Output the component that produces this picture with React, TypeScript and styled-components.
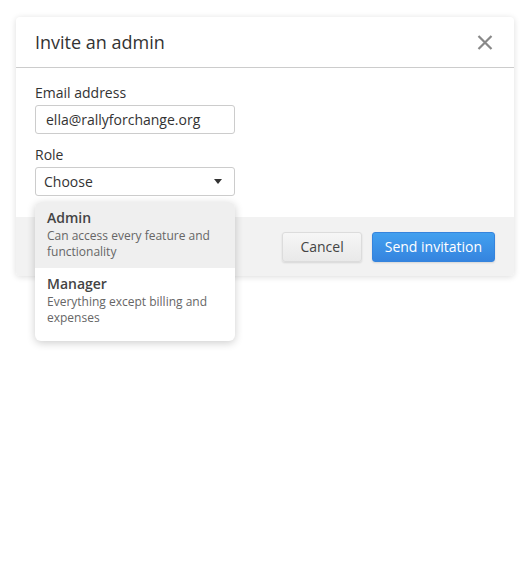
import React from "react"
import styled, { createGlobalStyle } from "styled-components"

const GlobalStyle = createGlobalStyle`
  body {
    margin: 0;
    background: #ffffff;
    font-family: "Open Sans", "Noto Sans", sans-serif;
    color: #333333;
  }
`

const Page = styled.div`
  min-height: 562px;
  box-sizing: border-box;
  padding: 17px 14px 0 16px;
`

const Dialog = styled.div`
  width: 498px;
  background: #ffffff;
  border-radius: 4px;
  box-shadow: 0 1px 6px rgba(0, 0, 0, 0.14);
  position: relative;
`

const Header = styled.div`
  height: 50px;
  display: flex;
  align-items: center;
  justify-content: space-between;
  padding: 0 19px;
  border-bottom: 1px solid #cccccc;
`

const Title = styled.h2`
  margin: 0;
  font-size: 18px;
  font-weight: 400;
  color: #333333;
`

const CloseButton = styled.button`
  border: none;
  background: transparent;
  padding: 0;
  width: 18px;
  height: 18px;
  display: flex;
  align-items: center;
  justify-content: center;
  cursor: pointer;
  margin-right: 1px;
`

const Body = styled.div`
  padding: 15px 19px 21px;
  display: flex;
  flex-direction: column;
`

const Label = styled.label`
  font-size: 14px;
  line-height: 20px;
  color: #333333;
  margin-bottom: 2px;
`

const Field = styled.div`
  width: 200px;
  height: 29px;
  box-sizing: border-box;
  border: 1px solid #cccccc;
  border-radius: 3px;
  display: flex;
  align-items: center;
  justify-content: space-between;
  padding: 0 12px 0 ${props => props.$inset}px;
  font-size: 14px;
  color: #333333;
  margin-bottom: ${props => props.$gap}px;
  position: relative;
`

const Arrow = styled.span`
  width: 0;
  height: 0;
  border-left: 4px solid transparent;
  border-right: 4px solid transparent;
  border-top: 5px solid #333333;
`

const Menu = styled.div`
  position: absolute;
  top: 34px;
  left: -1px;
  width: 200px;
  background: #ffffff;
  border-radius: 6px;
  box-shadow: 0 2px 8px rgba(0, 0, 0, 0.2);
  padding-bottom: 7px;
  overflow: hidden;
  z-index: 2;
`

const Option = styled.div`
  padding: 6px 12px 8px;
  background: ${props => props.$active ? "#efefef" : "#ffffff"};
`

const OptionTitle = styled.div`
  font-size: 14px;
  line-height: 20px;
  font-weight: 600;
  color: #444444;
`

const OptionText = styled.div`
  font-size: 12px;
  line-height: 16px;
  color: #666666;
`

const Footer = styled.div`
  background: #f2f2f2;
  height: 59px;
  box-sizing: border-box;
  padding: 15px 19px 0;
  display: flex;
  justify-content: flex-end;
  align-items: flex-start;
  gap: 10px;
  border-radius: 0 0 4px 4px;
`

const Button = styled.button`
  height: 30px;
  padding: 0 ${props => props.$primary ? 12 : 17}px 1px;
  border-radius: 3px;
  font-family: "Open Sans", "Noto Sans", sans-serif;
  font-size: 14px;
  cursor: pointer;
  border: 1px solid ${props => props.$primary ? "#3584dd" : "#dcdcdc"};
  color: ${props => props.$primary ? "#ffffff" : "#444444"};
  background: ${props => props.$primary
    ? "linear-gradient(#42a0ef, #3584df)"
    : "linear-gradient(#f6f6f6, #e9e9e9)"};
  box-shadow: 0 1px 2px rgba(0, 0, 0, 0.12);
`

const roles = [
  { name: "Admin", text: "Can access every feature and functionality" },
  { name: "Manager", text: "Everything except billing and expenses" },
]

export default function App() {
  return (
    <Page>
      <GlobalStyle />
      <Dialog>
        <Header>
          <Title>Invite an admin</Title>
          <CloseButton aria-label="Close">
            <svg width="16" height="15" viewBox="0 0 16 15">
              <path d="M1.5 1 L14.5 14 M14.5 1 L1.5 14" stroke="#888888" strokeWidth="2.2" />
            </svg>
          </CloseButton>
        </Header>
        <Body>
          <Label>Email address</Label>
          <Field $inset={10} $gap={11}>ella@rallyforchange.org</Field>
          <Label>Role</Label>
          <Field $inset={8} $gap={0}>
            Choose
            <Arrow />
            <Menu>
              {roles.map((role, i) => (
                <Option key={role.name} $active={i === 0}>
                  <OptionTitle>{role.name}</OptionTitle>
                  <OptionText>{role.text}</OptionText>
                </Option>
              ))}
            </Menu>
          </Field>
        </Body>
        <Footer>
          <Button>Cancel</Button>
          <Button $primary>Send invitation</Button>
        </Footer>
      </Dialog>
    </Page>
  )
}
